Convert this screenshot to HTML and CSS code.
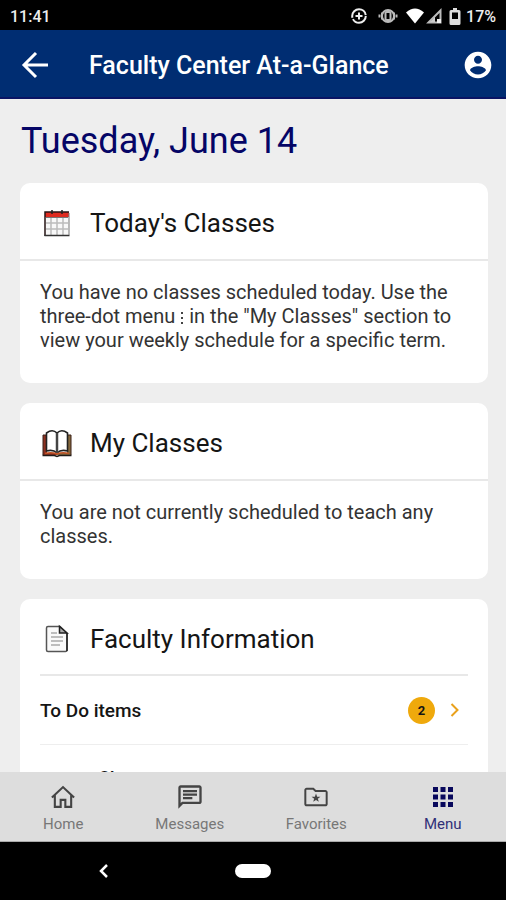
FILE: index.html
```html
<!DOCTYPE html>
<html lang="en">
<head>
<meta charset="utf-8">
<meta name="viewport" content="width=device-width, initial-scale=1">
<title>Faculty Center At-a-Glance</title>
<link rel="stylesheet" href="styles.css">
</head>
<body>
<div class="status">
  <span class="clock">11:41</span>
  <div class="indicators">
    <svg width="18" height="18" viewBox="0 0 18 18" fill="none" stroke="#eee" stroke-width="2"><circle cx="9" cy="9" r="6.800" stroke-dasharray="18 1.500 22 1.200"/><path d="M9 5.500v7M5.500 9h7"/></svg>
    <svg class="vibrate" width="20" height="16" viewBox="0 0 20 16" fill="none" stroke="#bbb" stroke-width="2"><circle cx="10" cy="8" r="6"/><rect x="7.500" y="4" width="5" height="8" rx="1" fill="#000"/><path d="M4 4.500v7M16 4.500v7M1.500 6.500v3M18.500 6.500v3"/></svg>
    <svg width="18" height="16" viewBox="0 0 18 16" fill="#fff"><path d="M9 15.500 0 4.500Q9-3.500 18 4.500Z"/></svg>
    <svg class="signal" width="16" height="16" viewBox="0 0 16 16" fill="none"><path d="M2.500 14.500 14.500 2.500v12Z" stroke="#bbb" stroke-width="2"/><path d="M4 14 9 9v5Z" fill="#ccc"/><path d="M11 11h4v4h-4z" fill="#eee"/></svg>
    <svg class="battery" width="12" height="17" viewBox="0 0 12 17"><path d="M4 0h4v2h2q1.500 0 1.500 1.500v12Q11.500 17 10 17H2Q.5 17 .5 15.500v-12Q.5 2 2 2h2Z" fill="#ddd"/><path d="M3 4.500h6V11H3Z" fill="#000"/></svg>
    <span class="percent">17%</span>
  </div>
</div>
<header class="appbar">
  <button class="icon-button" aria-label="Back"><svg width="28" height="28" viewBox="0 0 28 28" fill="none" stroke="#fff" stroke-width="3"><path d="M27 14H3M15 2 3 14l12 12"/></svg></button>
  <h1>Faculty Center At-a-Glance</h1>
  <button class="icon-button" aria-label="Account"><svg width="32" height="32" viewBox="0 0 24 24" fill="#fff"><path d="M12 2C6.480 2 2 6.480 2 12s4.480 10 10 10 10-4.480 10-10S17.520 2 12 2zm0 3c1.660 0 3 1.340 3 3s-1.340 3-3 3-3-1.340-3-3 1.340-3 3-3zm0 14.200c-2.500 0-4.710-1.280-6-3.220.03-1.990 4-3.080 6-3.080 1.990 0 5.970 1.090 6 3.080-1.290 1.940-3.500 3.220-6 3.220z"/></svg></button>
</header>
<main>
  <h2 class="date">Tuesday, June 14</h2>
  <section class="card">
    <div class="card-head">
      <svg width="34" height="34" viewBox="0 0 34 34"><path d="M5 6h24v24H5Z" fill="#f8f8f8"/><path d="M5 6h24v5H5Z" fill="#df2b20"/><path d="M11 12v17M17 12v17M23 12v17M6 17h22M6 23h22" stroke="#bbb" stroke-width="1.500"/><path d="M5 30V6h24" fill="none" stroke="#261414" stroke-width="1.500"/><path d="M4.500 29.500h25" stroke="#333" stroke-width="1.500"/><path d="M29 7v22M6 11.500h22" stroke="#777"/><path d="M12 4v4M22 4v4" stroke="#222" stroke-width="1.500"/></svg>
      <h3>Today's Classes</h3>
    </div>
    <p>You have no classes scheduled today. Use the three-dot menu <svg class="dots" width="4" height="14" viewBox="0 0 4 14" fill="#444"><path d="M1 1h2v2H1zM1 6h2v2H1zM1 11h2v2H1z"/></svg> in the "My Classes" section to view your weekly schedule for a specific term.</p>
  </section>
  <section class="card">
    <div class="card-head">
      <svg width="34" height="34" viewBox="0 0 34 34"><path d="M3 9h4v18h10v2H3Z" fill="#8c3020"/><path d="M31 9h-4v18H17v2h14Z" fill="#84683c"/><path d="M3 29V9h3M31 29V9h-3" fill="none" stroke="#3a2018"/><path d="M6.500 25V7q6-4.500 10.500 0 4.500-4.500 10.500 0v18q-6.500-2-10.500 2-4-4-10.500-2Z" fill="#fff" stroke="#222" stroke-width="1.600"/><path d="M17 7v20" stroke="#444" stroke-width="2.500"/><path d="M5 27.500q7-1.500 12 .5 5-2 12-.5" fill="none" stroke="#c45325" stroke-width="1.500"/><path d="M2.500 29.500h12l2.500 1 2.500-1h12" fill="none" stroke="#201b18" stroke-width="1.500"/></svg>
      <h3>My Classes</h3>
    </div>
    <p>You are not currently scheduled to teach any classes.</p>
  </section>
  <section class="card">
    <div class="card-head flush">
      <svg width="34" height="34" viewBox="0 0 34 34" fill="none"><path d="M8 4.500h12l7 7V28q0 1.500-1.500 1.500H8Q6.500 29.500 6.500 28V6Q6.500 4.500 8 4.500Z" fill="#fafafa" stroke="#555" stroke-width="1.500"/><path d="M27 11v18" stroke="#222" stroke-width="1.500"/><path d="M19.500 4.500V11H27Z" fill="#aaa" stroke="#222" stroke-width="1.500"/><path d="M11 11h6M11 15h12M11 19h12M11 23h9" stroke="#aaa" stroke-width="1.500"/></svg>
      <h3>Faculty Information</h3>
    </div>
    <ul class="rows">
      <li><a href="#todo"><span>To Do items</span><span class="count">2</span><svg width="10" height="14" viewBox="0 0 10 14" fill="none" stroke="#e9a11b" stroke-width="2"><path d="m1.500 1 6 6-6 6"/></svg></a></li>
      <li><a href="#profile"><span>My profile</span></a></li>
    </ul>
  </section>
</main>
<nav class="tabs">
  <a href="#home"><svg width="28" height="28" viewBox="0 0 24 24" fill="none" stroke="#444" stroke-width="1.800"><path d="m2.500 12.500 9.500-9 9.500 9M5 10.500V20.500h5v-6h4v6h5v-10"/></svg>Home</a>
  <a href="#messages"><svg width="30" height="28" viewBox="0 0 24 24" fill="#444"><path d="M4 4h16v12H5.170L4 17.170V4m0-2c-1.100 0-1.990.9-1.990 2L2 22l4-4h14c1.100 0 2-.9 2-2V4c0-1.100-.9-2-2-2H4zm2 10h8v2H6v-2zm0-3h12v2H6V9zm0-3h12v2H6V6z"/></svg>Messages</a>
  <a href="#favorites"><svg width="30" height="28" viewBox="0 0 24 24" fill="#444"><path d="M20 6h-8l-2-2H4c-1.100 0-2 .9-2 2v12c0 1.100.9 2 2 2h16c1.100 0 2-.9 2-2V8c0-1.100-.9-2-2-2zm.3 12.300H3.700V5.700h5.600l2 2h9z"/><path d="m12 9 1 2.700h2.800l-2.200 1.700.8 2.700-2.400-1.600-2.400 1.600.8-2.700-2.200-1.700H11z"/></svg>Favorites</a>
  <a href="#menu" class="active"><svg width="28" height="28" viewBox="0 0 28 28" fill="#08085c"><path d="M4 4h5v5H4zM11.500 4h5v5h-5zM19 4h5v5h-5zM4 11.500h5v5H4zM11.500 11.500h5v5h-5zM19 11.500h5v5h-5zM4 19h5v5H4zM11.500 19h5v5h-5zM19 19h5v5h-5z"/></svg>Menu</a>
</nav>
<div class="system">
  <button aria-label="System back"><svg width="10" height="14" viewBox="0 0 10 14" fill="none" stroke="#fff" stroke-width="2.500"><path d="M8 1 2 7l6 6"/></svg></button>
  <button class="pill" aria-label="System home"></button>
</div>
</body>
</html>
```
FILE: styles.css
```css
* { box-sizing: border-box; }
body {
  margin: 0;
  height: 100vh;
  display: flex;
  flex-direction: column;
  overflow: hidden;
  background: #eee;
  color: #151515;
  font-family: Roboto, "Liberation Sans", sans-serif;
}
h1, h2, h3, p, ul { margin: 0; padding: 0; }
h2, h3 { font-weight: 400; }
a { color: inherit; text-decoration: none; }
svg { display: block; flex: none; }
button { border: 0; padding: 0; background: none; cursor: pointer; }

.status {
  flex: none;
  height: 30px;
  padding: 2px 10px 0;
  display: flex;
  align-items: center;
  justify-content: space-between;
  background: #000;
  color: #eee;
  font-size: 16px;
  font-weight: 500;
}
.indicators { display: flex; align-items: center; }
.vibrate { margin: 0 8px 0 10px; }
.signal { margin-left: 2px; }
.battery { margin: 0 5px 0 7px; }

.appbar {
  flex: none;
  height: 69px;
  padding: 2px 12px 0 21px;
  display: flex;
  align-items: center;
  background: #002d72;
  border-bottom: 2px solid #0a1464;
  color: #fff;
}
.appbar h1 { flex: 1; margin-left: 40px; padding-top: 2px; font-size: 25px; font-weight: 500; }

main { flex: 1; min-height: 0; overflow: hidden; padding: 21px 18px 0 20px; }
.date { margin-bottom: 21px; padding-left: 1px; font-size: 36px; line-height: 42px; color: #050566; }

.card { margin-bottom: 20px; background: #fff; border-radius: 10px; }
.card-head {
  height: 78px;
  padding: 4px 20px 0;
  display: flex;
  align-items: center;
  gap: 16px;
  border-bottom: 2px solid #e8e8e8;
}
.card-head h3 { font-size: 26px; }
.card-head.flush { height: 77px; margin: 0 20px; padding: 4px 0 0; }
.card p { padding: 19px 20px 31px; font-size: 20px; line-height: 24px; color: #333; }
.dots { display: inline-block; vertical-align: -2px; }

.rows { list-style: none; margin: 0 20px; }
.rows a { height: 69px; display: flex; align-items: center; border-bottom: 1px solid #eee; font-size: 19px; font-weight: 500; }
.rows li + li a { height: 68px; }
.rows a > span:first-child { flex: 1; }
.rows svg { margin: 0 8px 0 15px; }
.rows .count {
  width: 27px;
  height: 27px;
  border-radius: 50%;
  background: #efa90c;
  font-size: 13px;
  font-weight: 700;
  line-height: 27px;
  text-align: center;
}

.tabs { flex: none; height: 70px; display: grid; grid-template-columns: repeat(4, 1fr); background: #ddd; border-bottom: 1px solid #aaa; }
.tabs a {
  display: flex;
  flex-direction: column;
  align-items: center;
  padding-top: 11px;
  gap: 4px;
  font-size: 15px;
  line-height: 18px;
  color: #777;
}
.tabs .active { color: #303078; }

.system { flex: none; height: 58px; display: grid; grid-template-columns: 9fr 4fr 9fr; align-items: center; justify-items: center; background: #000; }
.system .pill { width: 36px; height: 14px; border-radius: 7px; background: #fff; }
```
